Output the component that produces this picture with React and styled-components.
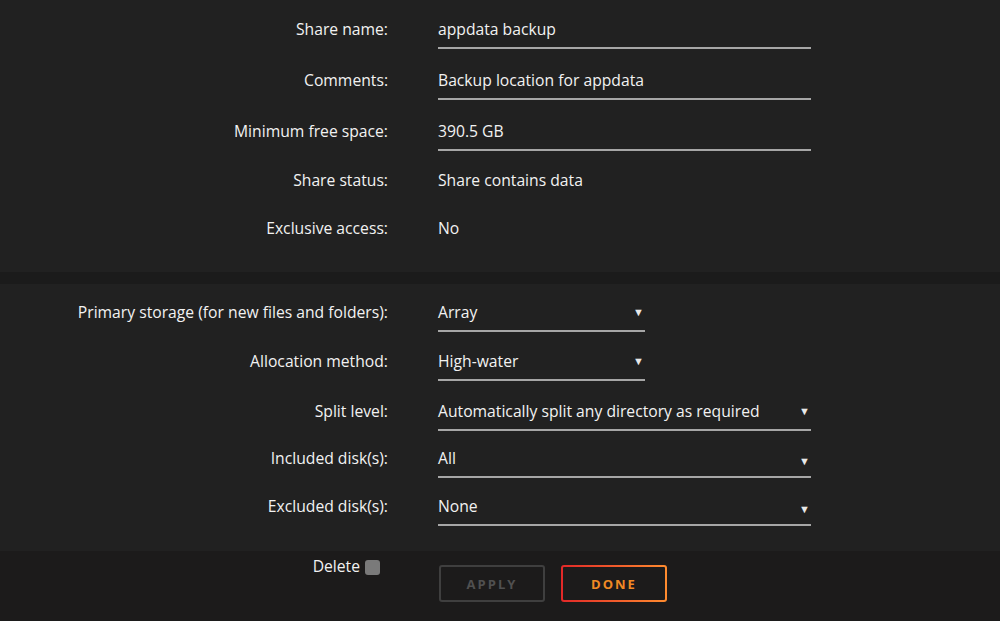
import React from "react";
import styled, { createGlobalStyle } from "styled-components";

const Global = createGlobalStyle`
  html, body { margin: 0; padding: 0; background: #1c1b1b; }
  body { font-family: "Open Sans", "Noto Sans", sans-serif; color: #f2f2f2; }
`;

const Page = styled.div`
  width: 1000px;
  height: 621px;
  display: flex;
  flex-direction: column;
  background: #1c1b1b;
  overflow: hidden;
`;

const Panel = styled.section`
  background: #212121;
  padding: ${(p) => p.$pad};
  display: flex;
  flex-direction: column;
`;

const Band = styled.div`
  height: 12px;
  background: #1b1b1b;
`;

const Row = styled.div`
  display: grid;
  grid-template-columns: 388px 1fr;
  column-gap: 50px;
  height: ${(p) => p.$h}px;
  align-items: start;
  font-size: 15.7px;
  line-height: 20px;
`;

const Label = styled.div`
  text-align: right;
  color: #f2f2f2;
  white-space: nowrap;
`;

const Field = styled.div`
  width: ${(p) => (p.$short ? 207 : 373)}px;
  height: 30px;
  box-sizing: border-box;
  padding-bottom: 8px;
  border-bottom: 2px solid ${(p) => (p.$plain ? "transparent" : "#a6a6a6")};
  display: flex;
  align-items: center;
  justify-content: space-between;
  color: #f2f2f2;
  white-space: nowrap;
`;

const Arrow = styled.span`
  font-size: 11px;
  color: #e8e8e8;
  margin-right: 1px;
  transform: translateY(${(p) => p.$dy || 0}px);
`;

const Footer = styled.footer`
  flex: 1;
  background: #1c1b1b;
  display: grid;
  grid-template-columns: 380px 1fr;
  column-gap: 59px;
  align-items: start;
  padding-top: 5px;
`;

const DeleteBox = styled.label`
  display: flex;
  justify-content: flex-end;
  align-items: center;
  gap: 5px;
  font-size: 15.7px;
  line-height: 20px;
  color: #f2f2f2;
`;

const Check = styled.span`
  width: 15px;
  height: 15px;
  border-radius: 3px;
  background: #7a7a7a;
  margin-top: 2px;
`;

const Buttons = styled.div`
  display: flex;
  gap: 16px;
  margin-top: 9px;
`;

const Button = styled.button`
  width: 106px;
  height: 37px;
  box-sizing: border-box;
  background: #1c1b1b;
  border-radius: 3px;
  font-family: "Open Sans", sans-serif;
  font-weight: 700;
  font-size: 13px;
  letter-spacing: 2px;
  padding: 0;
  border: 2px solid #3f3f3f;
  color: #505050;
  ${(p) =>
    p.$primary &&
    `
    border: 2px solid transparent;
    background: linear-gradient(#1c1b1b, #1c1b1b) padding-box,
      linear-gradient(90deg, #e22828, #ff8c2f) border-box;
    color: #f08a24;
  `}
`;

const top = [
  { label: "Share name:", value: "appdata backup", h: 51 },
  { label: "Comments:", value: "Backup location for appdata", h: 51 },
  { label: "Minimum free space:", value: "390.5 GB", h: 49 },
  { label: "Share status:", value: "Share contains data", h: 48, plain: true },
  { label: "Exclusive access:", value: "No", h: 20, plain: true },
];

const bottom = [
  { label: "Primary storage (for new files and folders):", value: "Array", h: 49, short: true },
  { label: "Allocation method:", value: "High-water", h: 50, short: true },
  { label: "Split level:", value: "Automatically split any directory as required", h: 47 },
  { label: "Included disk(s):", value: "All", h: 48, dy: 3 },
  { label: "Excluded disk(s):", value: "None", h: 30, dy: 3 },
];

export default function App() {
  return (
    <Page>
      <Global />
      <Panel $pad="19px 0 34px">
        {top.map((r) => (
          <Row key={r.label} $h={r.h}>
            <Label>{r.label}</Label>
            <Field $plain={r.plain}>{r.value}</Field>
          </Row>
        ))}
      </Panel>
      <Band />
      <Panel $pad="18px 0 25px">
        {bottom.map((r) => (
          <Row key={r.label} $h={r.h}>
            <Label>{r.label}</Label>
            <Field $short={r.short}>
              <span>{r.value}</span>
              <Arrow $dy={r.dy}>▼</Arrow>
            </Field>
          </Row>
        ))}
      </Panel>
      <Footer>
        <DeleteBox>
          Delete
          <Check />
        </DeleteBox>
        <Buttons>
          <Button>APPLY</Button>
          <Button $primary>DONE</Button>
        </Buttons>
      </Footer>
    </Page>
  );
}
